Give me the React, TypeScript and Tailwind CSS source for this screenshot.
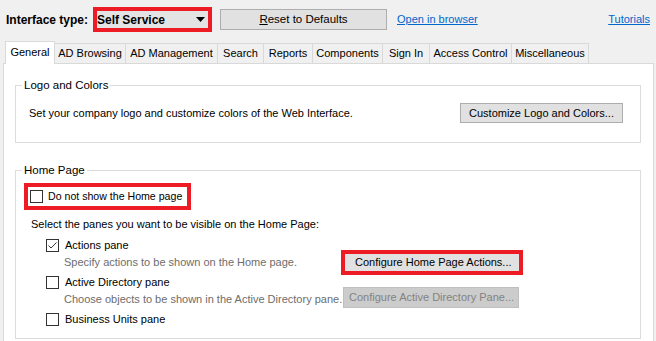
import type { ReactNode } from 'react';

const Check = ({ checked = false }: { checked?: boolean }) => (
  <span className="w-[13px] h-[13px] shrink-0 border border-[#333333] bg-white flex items-center justify-center">
    {checked && (
      <svg width="11" height="11" viewBox="0 0 11 11">
        <path d="M1.5 5.5 L4 8 L9.5 2.5" fill="none" stroke="#333333" strokeWidth="1" />
      </svg>
    )}
  </span>
);

const tabs = [
  { label: 'AD Browsing', w: 'w-[71px]' },
  { label: 'AD Management', w: 'w-[92px]' },
  { label: 'Search', w: 'w-[46px]' },
  { label: 'Reports', w: 'w-[49px]' },
  { label: 'Components', w: 'w-[70px]' },
  { label: 'Sign In', w: 'w-[47px]' },
  { label: 'Access Control', w: 'w-[82px]' },
  { label: 'Miscellaneous', w: 'w-[77px]' },
];

// group box: legend sits on the border, body padding lives on the inner div
const Group = ({ title, className, children }: { title: string; className: string; children: ReactNode }) => (
  <fieldset className={`w-[626px] border border-[#dcdcdc] p-0 ${className}`}>
    <legend className="ml-[6px] px-[2px] leading-[14px] text-[11.5px] text-black">{title}</legend>
    {children}
  </fieldset>
);

export default function App() {
  return (
    <div className="w-[656px] h-[341px] overflow-hidden bg-[#f0f0f0] text-[11px] text-black font-['Liberation_Sans',Arial,sans-serif]">
      {/* top bar */}
      <div className="flex items-center h-[25px] mt-[7px] pl-[6px] pr-[6px]">
        <span className="font-bold text-[12px] w-[87px]">Interface type:</span>
        <div className="w-[119px] h-[25px] border-4 border-[#ed1c24]">
          <div className="h-full bg-[#e3e3e3] flex items-center justify-between pr-[3px]">
            <span className="font-bold text-[12px]">Self Service</span>
            <svg width="9" height="5" viewBox="0 0 9 5">
              <path d="M0 0 H9 L4.5 5 Z" fill="#000" />
            </svg>
          </div>
        </div>
        <button className="ml-[8px] w-[167px] h-[21px] border border-[#adadad] bg-[#e1e1e1] text-[11.5px] leading-none">
          <span className="underline">R</span>eset to Defaults
        </button>
        <span className="ml-[10px] text-[#0066cc] underline">Open in browser</span>
        <span className="ml-auto text-[#0066cc] underline">Tutorials</span>
      </div>

      {/* tabs */}
      <div className="flex items-end h-[23px] mt-[8px] pl-[5px]">
        <div className="relative z-10 w-[50px] h-[23px] -mb-[1px] border border-b-0 border-[#d9d9d9] bg-white flex items-center justify-center pb-[2px]">
          General
        </div>
        {tabs.map((t) => (
          <div
            key={t.label}
            className={`${t.w} h-[20px] border-t border-r border-[#d9d9d9] bg-[#f0f0f0] flex items-center justify-center`}
          >
            {t.label}
          </div>
        ))}
      </div>

      {/* panel */}
      <div className="ml-[3px] w-[651px] h-[300px] border border-[#d9d9d9] bg-white pl-[11px]">
        <Group title="Logo and Colors" className="mt-[14px]">
          <div className="flex items-center justify-between h-[20px] mt-[11px] mb-[19px] ml-[13px] mr-[17px]">
            <span>Set your company logo and customize colors of the Web Interface.</span>
            <button className="w-[163px] h-[20px] border border-[#adadad] bg-[#e1e1e1] leading-none">
              Customize Logo and Colors...
            </button>
          </div>
        </Group>

        <Group title="Home Page" className="mt-[20px] h-[176px]">
          <div className="pt-[6px] pl-[8px]">
            <div className="w-[167px] h-[27px] border-4 border-[#ed1c24] flex items-center pl-[2px] gap-[5px]">
              <Check />
              <span className="whitespace-nowrap text-[10.6px]">Do not show the Home page</span>
            </div>

            <div className="mt-[7px] h-[14px] ml-[7px] leading-[14px]">
              Select the panes you want to be visible on the Home Page:
            </div>

            <div className="mt-[8px] h-[11px] ml-[22px] flex items-start gap-[6px]">
              <Check checked />
              <span className="leading-[13px]">Actions pane</span>
            </div>
            <div className="h-[25px] flex items-center">
              <span className="ml-[40px] w-[277px] text-[#6d6d6d]">Specify actions to be shown on the Home page.</span>
              <div className="w-[182px] h-[25px] border-4 border-[#ed1c24]">
                <button className="w-full h-full bg-[#e1e1e1] text-left pl-[10px] leading-none">
                  Configure Home Page Actions...
                </button>
              </div>
            </div>

            <div className="mt-[1px] h-[11px] ml-[22px] flex items-start gap-[6px]">
              <Check />
              <span className="leading-[13px]">Active Directory pane</span>
            </div>
            <div className="h-[21px] flex items-center">
              <span className="ml-[40px] w-[279px] pt-[3px] text-[#6d6d6d] whitespace-nowrap">
                Choose objects to be shown in the Active Directory pane.
              </span>
              <button className="w-[176px] h-[21px] border border-[#bfbfbf] bg-[#cccccc] text-[#838383] text-left pl-[5px] leading-none">
                Configure Active Directory Pane...
              </button>
            </div>

            <div className="mt-[5px] h-[13px] ml-[22px] flex items-center gap-[6px]">
              <Check />
              <span>Business Units pane</span>
            </div>
          </div>
        </Group>
      </div>
    </div>
  );
}
